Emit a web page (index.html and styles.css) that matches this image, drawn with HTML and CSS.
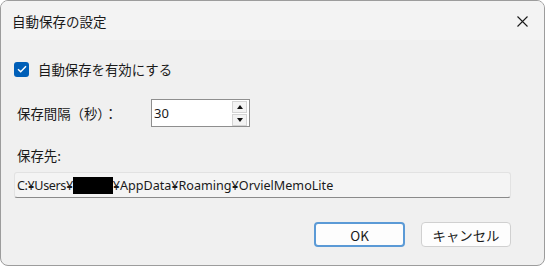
FILE: index.html
```html
<!DOCTYPE html>
<html lang="ja">
<head>
  <meta charset="UTF-8">
  <title>自動保存の設定</title>
  <link rel="stylesheet" href="styles.css">
</head>
<body>

  <div class="dialog">
    <div class="titlebar">
      <span class="title">自動保存の設定</span>
      <svg class="close" width="11" height="11" viewBox="0 0 11 11">
        <path d="M0.5 0.5 L10.5 10.5 M10.5 0.5 L0.5 10.5" stroke="#1a1a1a" stroke-width="1.1" fill="none"/>
      </svg>
    </div>

    <div class="content">
      <label class="check-row">
        <span class="checkbox">
          <svg width="10" height="8" viewBox="0 0 10 8">
            <path d="M1 4.2 L3.7 6.8 L9 1.2" stroke="#fff" stroke-width="1.4" fill="none"/>
          </svg>
        </span>
        <span>自動保存を有効にする</span>
      </label>

      <div class="interval-row">
        <span class="interval-label">保存間隔（秒）：</span>
        <div class="spinbox">
          <span class="spin-value">30</span>
          <div class="spin-buttons">
            <span class="spin-btn"><span class="tri-up"></span></span>
            <span class="spin-btn"><span class="tri-down"></span></span>
          </div>
        </div>
      </div>

      <div class="path-label">保存先:</div>
      <div class="path-field"><span class="path-head">C:¥Users¥</span><span class="redacted"></span>¥AppData¥Roaming¥OrvielMemoLite</div>

      <div class="buttons">
        <button class="btn btn-primary">OK</button>
        <button class="btn">キャンセル</button>
      </div>
    </div>
  </div>

</body>
</html>
```

FILE: styles.css
```css
body { margin: 0; background: #ffffff; font-family: "Noto Sans CJK JP", "Noto Sans", sans-serif; color: #1a1a1a; }
.dialog { width: 545px; height: 266px; box-sizing: border-box; border: 1px solid #9c9c9c; border-radius: 8px; background: #f0f0f0; overflow: hidden; display: flex; flex-direction: column; }
.titlebar { height: 39px; flex: none; background: #f3f3f3; display: flex; align-items: center; justify-content: space-between; padding: 0 16px 0 11px; }
.title { font-size: 13.5px; }
.close { margin-top: 2px; }
.content { padding: 0 33px 0 13px; font-size: 13.4px; }
.check-row { display: flex; align-items: center; gap: 9px; height: 16px; margin-top: 21px; }
.checkbox { width: 15px; height: 15px; border-radius: 3px; background: #005fb8; display: flex; align-items: center; justify-content: center; }
.interval-row { display: flex; align-items: center; margin-top: 22px; height: 28px; }
.interval-label { width: 134px; padding-left: 3px; }
.spinbox { width: 99px; height: 28px; box-sizing: border-box; border: 1px solid #8e8e8e; background: #ffffff; display: flex; align-items: center; justify-content: space-between; padding: 0 2px 0 2px; }
.spin-value { font-family: "Noto Sans", sans-serif; font-size: 13px; }
.spin-buttons { display: flex; flex-direction: column; gap: 1px; }
.spin-btn { width: 15px; height: 12px; box-sizing: border-box; border: 1px solid #d4d4d4; background: #f3f3f3; display: flex; align-items: center; justify-content: center; }
.tri-up { width: 0; height: 0; border-left: 3.5px solid transparent; border-right: 3.5px solid transparent; border-bottom: 4px solid #111; }
.tri-down { width: 0; height: 0; border-left: 3.5px solid transparent; border-right: 3.5px solid transparent; border-top: 4px solid #111; }
.path-label { margin-top: 20px; padding-left: 3px; height: 16px; line-height: 16px; }
.path-field { margin-top: 9px; height: 26px; box-sizing: border-box; border: 1px solid #e2e2e2; border-bottom-color: #8a8a8a; border-radius: 3px; background: #f4f4f4; padding-left: 2px; display: flex; align-items: center; font-family: "Noto Sans", sans-serif; font-size: 12.6px; letter-spacing: 0; white-space: nowrap; }
.path-head { letter-spacing: -0.4px; }
.redacted { display: inline-block; width: 40px; height: 17px; background: #000; }
.buttons { display: flex; justify-content: flex-end; gap: 16px; margin-top: 24px; }
.btn { width: 90px; height: 25px; box-sizing: border-box; border: 1px solid #d0d0d0; border-radius: 4px; background: #fdfdfd; font-family: "Noto Sans CJK JP", "Noto Sans", sans-serif; font-size: 13.4px; color: #1a1a1a; padding: 0; }
.btn-primary { width: 91px; border: 2px solid #5b9ad6; }
```
